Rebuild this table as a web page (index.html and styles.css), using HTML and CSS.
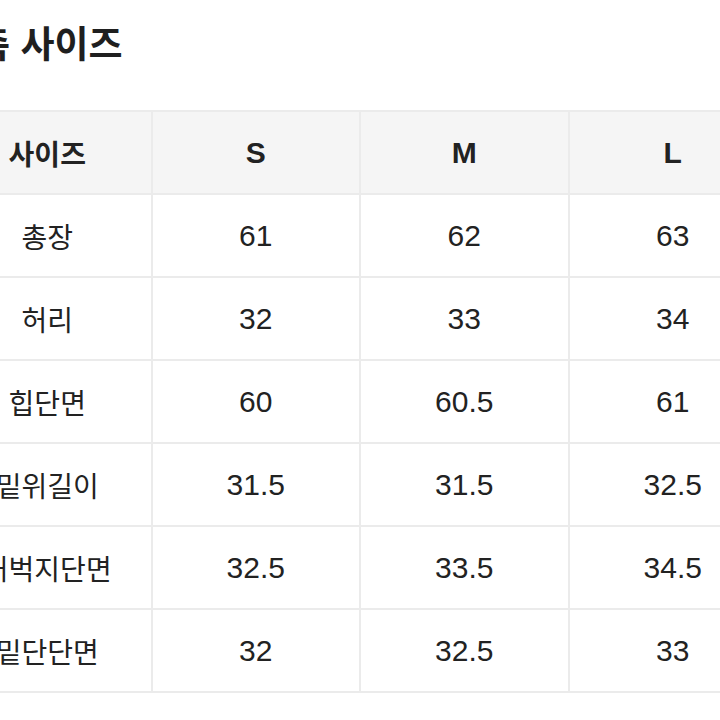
FILE: index.html
```html
<!DOCTYPE html>
<html lang="ko">
<head>
<meta charset="utf-8">
<title>실측 사이즈</title>
<link rel="stylesheet" href="styles.css">
</head>
<body>
<div class="page">
  <h2 class="title">실측 사이즈</h2>
  <table class="size-table">
    <colgroup>
      <col class="c"><col class="c"><col class="c"><col class="c">
    </colgroup>
    <thead>
      <tr><th class="label">사이즈</th><th>S</th><th>M</th><th>L</th></tr>
    </thead>
    <tbody>
      <tr><td class="label">총장</td><td>61</td><td>62</td><td>63</td></tr>
      <tr><td class="label">허리</td><td>32</td><td>33</td><td>34</td></tr>
      <tr><td class="label">힙단면</td><td>60</td><td>60.5</td><td>61</td></tr>
      <tr><td class="label">밑위길이</td><td>31.5</td><td>31.5</td><td>32.5</td></tr>
      <tr><td class="label">허벅지단면</td><td>32.5</td><td>33.5</td><td>34.5</td></tr>
      <tr><td class="label">밑단단면</td><td>32</td><td>32.5</td><td>33</td></tr>
    </tbody>
  </table>
</div>
</body>
</html>
```

FILE: styles.css
```css
html, body {
  margin: 0;
  padding: 0;
  background: #ffffff;
  overflow: hidden;
}
body {
  width: 720px;
  height: 720px;
  font-family: "Liberation Sans", "Noto Sans CJK KR", sans-serif;
  color: #222222;
}
.page {
  margin-left: -58px;
  width: 900px;
  padding-top: 21px;
}
.title {
  margin: 0 0 46px 0;
  height: 43px;
  line-height: 43px;
  font-size: 37px;
  font-weight: 700;
  font-family: "Noto Sans CJK KR", sans-serif;
  color: #1f1f1f;
  letter-spacing: 0;
  white-space: nowrap;
}
.size-table {
  border-collapse: collapse;
  table-layout: fixed;
  width: 834px;
}
.size-table .c {
  width: 208.5px;
}
.size-table th,
.size-table td {
  border: 2px solid #ebebeb;
  height: 81px;
  padding: 0;
  text-align: center;
  vertical-align: middle;
  font-size: 30px;
  font-weight: 400;
  white-space: nowrap;
}
.size-table .label {
  font-size: 28px;
}
.size-table th {
  background: #f5f5f5;
  font-weight: 700;
}
```
